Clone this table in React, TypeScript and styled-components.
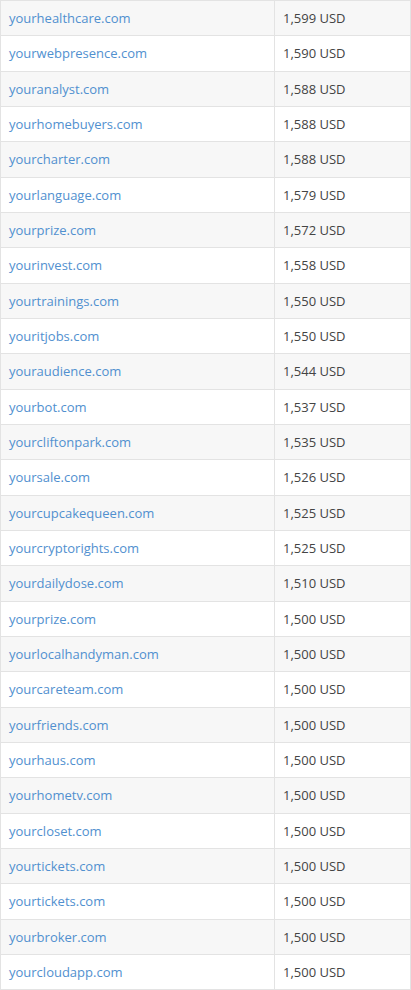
import React from "react";
import styled, { createGlobalStyle } from "styled-components";

const Global = createGlobalStyle`
  html, body { margin: 0; padding: 0; background: #fff; }
  body { font-family: "Open Sans", "Liberation Sans", sans-serif; font-size: 13px; color: #333; }
`;

const Table = styled.table`
  width: 411px;
  border-collapse: collapse;
  border: 1px solid #e3e3e3;
`;

const Row = styled.tr<{ $striped: boolean }>`
  background: ${(p) => (p.$striped ? "#f7f7f7" : "#fff")};
`;

const Cell = styled.td`
  padding: 8px 8px;
  height: 18.33px;
  line-height: 18.33px;
  border: 1px solid #e3e3e3;
  vertical-align: middle;
  white-space: nowrap;
`;

const NameCell = styled(Cell)`
  width: 257px;
`;

const PriceCell = styled(Cell)`
  color: #444;
`;

const DomainLink = styled.a`
  color: #5190cf;
  text-decoration: none;
`;

const rows: [string, string][] = [
  ["yourhealthcare.com", "1,599 USD"],
  ["yourwebpresence.com", "1,590 USD"],
  ["youranalyst.com", "1,588 USD"],
  ["yourhomebuyers.com", "1,588 USD"],
  ["yourcharter.com", "1,588 USD"],
  ["yourlanguage.com", "1,579 USD"],
  ["yourprize.com", "1,572 USD"],
  ["yourinvest.com", "1,558 USD"],
  ["yourtrainings.com", "1,550 USD"],
  ["youritjobs.com", "1,550 USD"],
  ["youraudience.com", "1,544 USD"],
  ["yourbot.com", "1,537 USD"],
  ["yourcliftonpark.com", "1,535 USD"],
  ["yoursale.com", "1,526 USD"],
  ["yourcupcakequeen.com", "1,525 USD"],
  ["yourcryptorights.com", "1,525 USD"],
  ["yourdailydose.com", "1,510 USD"],
  ["yourprize.com", "1,500 USD"],
  ["yourlocalhandyman.com", "1,500 USD"],
  ["yourcareteam.com", "1,500 USD"],
  ["yourfriends.com", "1,500 USD"],
  ["yourhaus.com", "1,500 USD"],
  ["yourhometv.com", "1,500 USD"],
  ["yourcloset.com", "1,500 USD"],
  ["yourtickets.com", "1,500 USD"],
  ["yourtickets.com", "1,500 USD"],
  ["yourbroker.com", "1,500 USD"],
  ["yourcloudapp.com", "1,500 USD"],
];

export default function App() {
  return (
    <>
      <Global />
      <Table>
        <tbody>
          {rows.map(([name, price], i) => (
            <Row key={i} $striped={i % 2 === 0}>
              <NameCell>
                <DomainLink href="#">{name}</DomainLink>
              </NameCell>
              <PriceCell>{price}</PriceCell>
            </Row>
          ))}
        </tbody>
      </Table>
    </>
  );
}
